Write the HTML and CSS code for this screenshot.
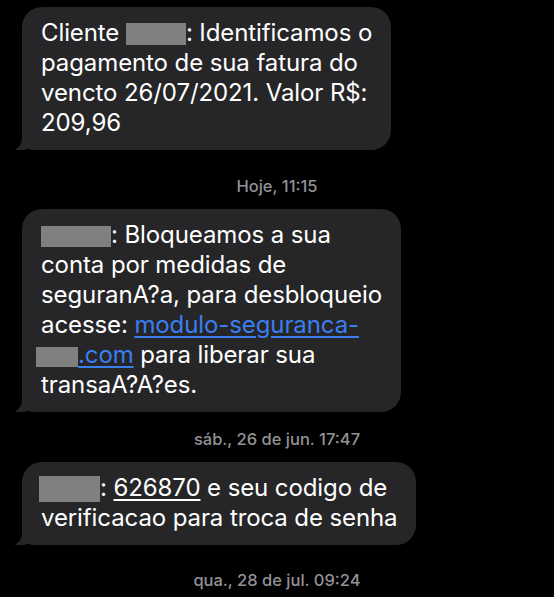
FILE: index.html
```html
<!DOCTYPE html>
<html lang="pt-BR">
<head>
<meta charset="utf-8">
<title>Mensagens</title>
<link rel="stylesheet" href="styles.css">
</head>
<body>
<main class="thread">
  <div class="bubble">
    <p class="msg">Cliente <span class="redact redact-a"></span>: Identificamos o<br>pagamento de sua fatura do<br>vencto 26/07/2021. Valor R$:<br>209,96</p>
    <svg class="tail" viewBox="0 0 28 22" aria-hidden="true"><path d="M8 0 H28 V22 H21 C18 22 16 21.5 14.5 20.5 C11 22.3 6 22.6 0.5 22 C5 19.5 8 15.5 8 10 Z"/></svg>
  </div>
  <div class="ts ts-first">Hoje, 11:15</div>
  <div class="bubble">
    <p class="msg"><span class="redact redact-b"></span>: Bloqueamos a sua<br>conta por medidas de<br>seguranA?a, para desbloqueio<br>acesse: <a class="link" href="#">modulo-seguranca-</a><br><span class="redact redact-c"></span><a class="link" href="#">.com</a> para liberar sua<br>transaA?A?es.</p>
    <svg class="tail" viewBox="0 0 28 22" aria-hidden="true"><path d="M8 0 H28 V22 H21 C18 22 16 21.5 14.5 20.5 C11 22.3 6 22.6 0.5 22 C5 19.5 8 15.5 8 10 Z"/></svg>
  </div>
  <div class="ts ts-mid">sáb., 26 de jun. 17:47</div>
  <div class="bubble">
    <p class="msg"><span class="redact redact-d"></span>: <span class="code">626870</span> e seu codigo de<br>verificacao para troca de senha</p>
    <svg class="tail" viewBox="0 0 28 22" aria-hidden="true"><path d="M8 0 H28 V22 H21 C18 22 16 21.5 14.5 20.5 C11 22.3 6 22.6 0.5 22 C5 19.5 8 15.5 8 10 Z"/></svg>
  </div>
  <div class="ts ts-last">qua., 28 de jul. 09:24</div>
</main>
</body>
</html>
```
FILE: styles.css
```css
html, body {
  margin: 0;
  padding: 0;
  background: #000;
}

body {
  width: 554px;
  height: 597px;
  overflow: hidden;
  font-family: Inter, "Liberation Sans", sans-serif;
}

.thread {
  display: flex;
  flex-direction: column;
  align-items: flex-start;
  padding: 7px 0 0 22px;
}

.bubble {
  position: relative;
  background: #262628;
  border-radius: 20px;
  padding: 11px 19px 12px;
}

.msg {
  margin: 0;
  color: #fff;
  font-size: 24px;
  line-height: 30px;
  white-space: nowrap;
  letter-spacing: -0.1px;
}

.tail {
  position: absolute;
  left: -8px;
  bottom: 0;
  width: 28px;
  height: 22px;
  fill: #262628;
}

.redact {
  display: inline-block;
  background: #808080;
  vertical-align: -4px;
}

.redact-a { width: 60px; height: 22px; }
.redact-b { width: 70px; height: 21px; }
.redact-c { width: 42px; height: 20px; margin-left: -5px; }
.redact-d { width: 61px; height: 26px; margin-left: -2px; vertical-align: -6px; }

.link {
  color: #3a7ff0;
  text-decoration: underline;
  text-underline-offset: 3px;
  text-decoration-thickness: 1.5px;
}

.code {
  text-decoration: underline;
  text-underline-offset: 3px;
  text-decoration-thickness: 1.5px;
}

.ts {
  align-self: stretch;
  margin-left: -22px;
  text-align: center;
  color: #929297;
  font-size: 16.5px;
  line-height: 18px;
  font-weight: 500;
  margin-bottom: 14px;
}

.ts-first { margin-top: 27px; }
.ts-mid { margin-top: 18px; }
.ts-last { margin-top: 26px; }
```
